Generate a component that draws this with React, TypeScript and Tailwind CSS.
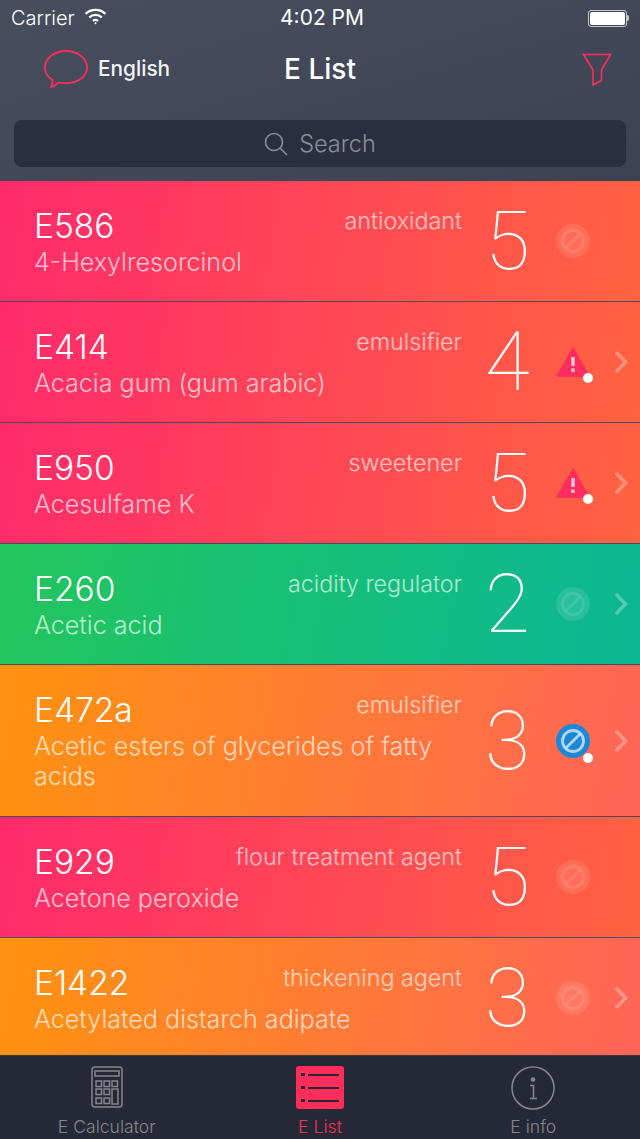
import React from 'react';

type Badge = 'faint' | 'warn' | 'blue';

type Additive = {
  code: string;
  name: string;
  kind: string;
  score: number;
  badge: Badge;
  chevron: boolean;
  gradient: string;
  tall?: boolean;
};

const red = 'bg-[linear-gradient(100deg,#ff2a6b,#ff6340)]';
const green = 'bg-[linear-gradient(100deg,#22c65c,#0bb795)]';
const orange = 'bg-[linear-gradient(100deg,#ff930f,#ff6458)]';

const additives: Additive[] = [
  { code: 'E586', name: '4-Hexylresorcinol', kind: 'antioxidant', score: 5, badge: 'faint', chevron: false, gradient: red },
  { code: 'E414', name: 'Acacia gum (gum arabic)', kind: 'emulsifier', score: 4, badge: 'warn', chevron: true, gradient: red },
  { code: 'E950', name: 'Acesulfame K', kind: 'sweetener', score: 5, badge: 'warn', chevron: true, gradient: red },
  { code: 'E260', name: 'Acetic acid', kind: 'acidity regulator', score: 2, badge: 'faint', chevron: true, gradient: green },
  { code: 'E472a', name: 'Acetic esters of glycerides of fatty acids', kind: 'emulsifier', score: 3, badge: 'blue', chevron: true, gradient: orange, tall: true },
  { code: 'E929', name: 'Acetone peroxide', kind: 'flour treatment agent', score: 5, badge: 'faint', chevron: false, gradient: red },
  { code: 'E1422', name: 'Acetylated distarch adipate', kind: 'thickening agent', score: 3, badge: 'faint', chevron: true, gradient: orange },
];

function BanIcon({ blue }: { blue: boolean }) {
  return (
    <svg width="34" height="34" viewBox="0 0 34 34">
      <circle cx="17" cy="17" r="17" fill={blue ? '#1b87d6' : '#fff'} fillOpacity={blue ? 1 : 0.11} />
      <circle cx="17" cy="17" r="10.500" fill="none" stroke="#fff" strokeOpacity={blue ? 0.65 : 0.11} strokeWidth="2.800" />
      <path d="M10 24L24 10" stroke="#fff" strokeOpacity={blue ? 0.65 : 0.11} strokeWidth="2.800" />
    </svg>
  );
}

function WarnIcon() {
  return (
    <svg width="34" height="32" viewBox="0 0 34 32">
      <path d="M17 1.500L33 29.500a0.800 0.800 0 0 1-0.700 1H1.700a0.800 0.800 0 0 1-0.700-1z" fill="#ff2d5f" stroke="#ff2d5f" strokeLinejoin="round" />
      <rect x="15.300" y="11" width="3.400" height="9" fill="#fff" fillOpacity="0.75" />
      <rect x="15.300" y="22.500" width="3.400" height="3.400" fill="#fff" fillOpacity="0.75" />
    </svg>
  );
}

function Chevron() {
  return (
    <svg width="14" height="24" viewBox="0 0 14 24" fill="none" className="ml-[24px] shrink-0">
      <path d="M2 2L11.500 12L2 22" stroke="#fff" strokeOpacity="0.3" strokeWidth="3.500" />
    </svg>
  );
}

function AdditiveRow({ item }: { item: Additive }) {
  return (
    <div className={`flex shrink-0 items-center border-b border-[#4a4d5f] pl-[34px] ${item.tall ? 'h-[152px]' : 'h-[121px]'} ${item.gradient}`}>
      <div className="flex h-full w-[428px] shrink-0 flex-col pt-[25px] text-white">
        <div className="flex items-start justify-between">
          <span className="text-[33.500px] leading-[40px] font-light">{item.code}</span>
          <span className="text-[23.300px] leading-[30px] font-light text-white/65">{item.kind}</span>
        </div>
        <div className="mt-[1px] text-[25.100px] leading-[30px] font-light text-white/70">{item.name}</div>
      </div>
      <div className="w-[92px] shrink-0 pr-[1px] text-center font-['Roboto',sans-serif] text-[82px] leading-none font-thin text-white">{item.score}</div>
      <div className="relative ml-[2px] flex w-[34px] shrink-0 items-center justify-center">
        {item.badge === 'warn' ? <WarnIcon /> : <BanIcon blue={item.badge === 'blue'} />}
        {item.badge !== 'faint' && (
          <span className="absolute right-[-3px] bottom-[-5px] h-[10px] w-[10px] rounded-full bg-white" />
        )}
      </div>
      {item.chevron && <Chevron />}
    </div>
  );
}

function CalculatorIcon() {
  const keys = [
    [5, 15], [13, 15], [21, 15],
    [5, 23], [13, 23],
    [5, 32], [13, 32],
  ];
  return (
    <svg width="32" height="42" viewBox="0 0 32 42" fill="none" stroke="#85878c" strokeWidth="1.500">
      <rect x="1" y="1" width="30" height="40" rx="3" />
      <rect x="4" y="5" width="24" height="5" />
      {keys.map(([x, y]) => (
        <rect key={`${x}-${y}`} x={x} y={y} width="5.500" height="5.500" />
      ))}
      <rect x="21" y="23" width="6" height="15" />
    </svg>
  );
}

function ListIcon() {
  return (
    <div className="flex h-[43px] w-[48px] flex-col justify-center gap-[10px] rounded-[3px] bg-[#ff2d5a] px-[5px]">
      {[0, 1, 2].map((i) => (
        <div key={i} className="flex items-center gap-[3px]">
          <span className="h-[3px] w-[4px] bg-[#252936]" />
          <span className="h-[2px] flex-1 bg-[#252936]" />
        </div>
      ))}
    </div>
  );
}

function InfoIcon() {
  return (
    <svg width="44" height="44" viewBox="0 0 44 44" fill="none">
      <circle cx="22" cy="22" r="21" stroke="#85878c" strokeWidth="1.500" />
      <circle cx="22" cy="13.500" r="2.300" fill="#85878c" />
      <path d="M19 19.500H22.500V32M19 32.500H26" stroke="#85878c" strokeWidth="1.600" />
    </svg>
  );
}

export default function App() {
  return (
    <div className="flex h-[1139px] w-[640px] flex-col overflow-hidden bg-[#252936] font-['Inter',sans-serif]">
      {/* Header */}
      <div className="flex h-[181px] shrink-0 flex-col bg-gradient-to-br from-[#474e5e] to-[#3d4252] px-[14px]">
        <div className="-mx-[3px] grid h-[36px] grid-cols-3 items-center text-white">
          <div className="flex items-center gap-[9px] text-[20px] font-light">
            Carrier
            <svg width="23" height="17" viewBox="0 0 22 16" fill="none" stroke="#fff" strokeWidth="2.200" className="mb-[4px]">
              <path d="M1.500 5.500a13.500 13.500 0 0 1 19 0" />
              <path d="M5 9a8.500 8.500 0 0 1 12 0" />
              <path d="M8.500 12.300a3.600 3.600 0 0 1 5 0" />
              <circle cx="11" cy="14.400" r="0.900" fill="#fff" stroke="none" />
            </svg>
          </div>
          <div className="pl-[4px] text-center text-[21px] whitespace-nowrap">4:02 PM</div>
          <div className="flex items-center justify-end">
            <div className="h-[17px] w-[39px] rounded-[3px] border border-white/70 p-[1px]">
              <div className="h-full w-full rounded-[2px] bg-white" />
            </div>
            <div className="h-[6px] w-[2px] rounded-r-sm bg-white/70" />
          </div>
        </div>
        <div className="grid h-[66px] grid-cols-3 items-center">
          <div className="ml-[30px] flex items-center gap-[10px]">
            <svg width="44" height="38" viewBox="0 0 44 38" fill="none" className="shrink-0">
              <path
                d="M7 37c2.500-.5 5-2 7.500-4.500 2 .5 4.500.7 7.500.7 11.500 0 21-6.500 21-15.700C43 8 33.500 1 22 1S1 8 1 17.500c0 5.500 3 10 7.500 12.500 .3 2.500-.3 5-1.500 7z"
                stroke="#ff2d5a"
                strokeWidth="1.800"
                strokeLinejoin="round"
              />
            </svg>
            <span className="text-[20.800px] font-medium text-white/95">English</span>
          </div>
          <div className="text-center text-[28px] font-medium text-white">E List</div>
          <div className="flex justify-end pr-[14px]">
            <svg width="30" height="33" viewBox="0 0 30 33" fill="none">
              <path d="M1.500 1.500H28.500L19.500 17V27.500L11 32V17Z" stroke="#ff2d5a" strokeWidth="1.600" />
            </svg>
          </div>
        </div>
        <div className="mt-[18px] flex h-[47px] items-center justify-center gap-[11px] rounded-[8px] bg-[#2a2f40] text-[23.500px] font-light text-[#8b8d94]">
          <svg width="24" height="24" viewBox="0 0 24 24" fill="none" stroke="#8b8d94" strokeWidth="1.600">
            <circle cx="10" cy="10" r="8.500" />
            <path d="M16 16L23 23" />
          </svg>
          Search
        </div>
      </div>

      {/* List */}
      <div className="flex min-h-0 flex-1 flex-col overflow-hidden">
        {additives.map((item) => (
          <AdditiveRow key={item.code} item={item} />
        ))}
      </div>

      {/* Tab bar */}
      <div className="grid h-[84px] shrink-0 grid-cols-3 border-t border-[#3a3a40] bg-[#252936] pt-[10px]">
        <div className="flex flex-col items-center gap-[9px] text-[17.600px] font-light text-[#85878c]">
          <CalculatorIcon />
          <span className="leading-[20px]">E Calculator</span>
        </div>
        <div className="flex flex-col items-center gap-[8px] text-[17.600px] font-light text-[#ff2d5a]">
          <ListIcon />
          <span className="leading-[20px]">E List</span>
        </div>
        <div className="flex flex-col items-center gap-[7px] text-[17.600px] font-light text-[#85878c]">
          <InfoIcon />
          <span className="leading-[20px]">E info</span>
        </div>
      </div>
    </div>
  );
}
